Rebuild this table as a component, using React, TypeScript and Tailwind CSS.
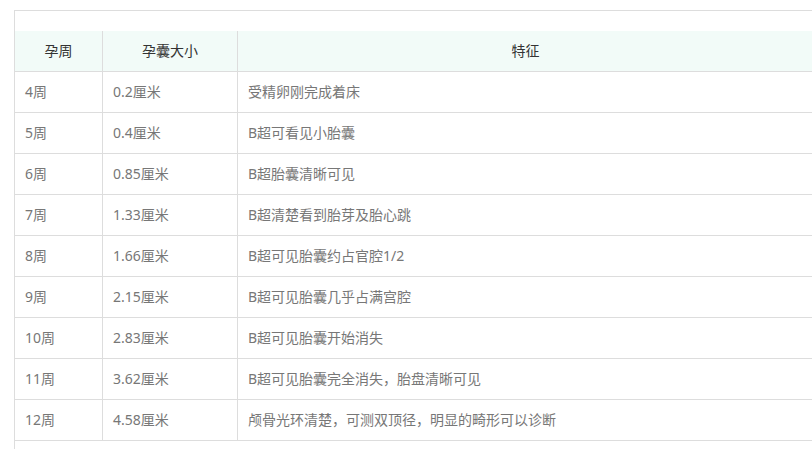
const rows = [
  ['4周', '0.2厘米', '受精卵刚完成着床'],
  ['5周', '0.4厘米', 'B超可看见小胎囊'],
  ['6周', '0.85厘米', 'B超胎囊清晰可见'],
  ['7周', '1.33厘米', 'B超清楚看到胎芽及胎心跳'],
  ['8周', '1.66厘米', 'B超可见胎囊约占官腔1/2'],
  ['9周', '2.15厘米', 'B超可见胎囊几乎占满宫腔'],
  ['10周', '2.83厘米', 'B超可见胎囊开始消失'],
  ['11周', '3.62厘米', 'B超可见胎囊完全消失，胎盘清晰可见'],
  ['12周', '4.58厘米', '颅骨光环清楚，可测双顶径，明显的畸形可以诊断'],
];

export default function App() {
  return (
    <div
      className="flex h-[449px] w-[812px] flex-col overflow-hidden bg-white pl-[14px] pt-[10px]"
      style={{ fontFamily: '"Noto Sans", "Noto Sans CJK SC", sans-serif' }}
    >
      <div className="w-[800px] flex-1 border-l border-t border-[#dddddd] pt-5">
        <table className="w-full table-fixed border-separate border-spacing-0 text-sm">
          <colgroup>
            <col className="w-[88px]" />
            <col className="w-[135px]" />
            <col />
          </colgroup>
          <thead>
            <tr className="bg-[#f2fbf8]">
              <th className="h-[41px] border-b border-r border-[#dddddd] p-0 text-center font-normal text-[#333333]">孕周</th>
              <th className="h-[41px] border-b border-r border-[#dddddd] p-0 text-center font-normal text-[#333333]">孕囊大小</th>
              <th className="h-[41px] border-b border-r border-[#dddddd] p-0 text-center font-normal text-[#333333]">特征</th>
            </tr>
          </thead>
          <tbody>
            {rows.map(([week, size, desc]) => (
              <tr key={week}>
                <td className="h-[41px] border-b border-r border-[#dddddd] py-0 pl-[10px] text-[#777777]">{week}</td>
                <td className="h-[41px] border-b border-r border-[#dddddd] py-0 pl-[10px] text-[#777777]">{size}</td>
                <td className="h-[41px] border-b border-r border-[#dddddd] py-0 pl-[10px] text-[#777777]">{desc}</td>
              </tr>
            ))}
          </tbody>
        </table>
      </div>
    </div>
  );
}
